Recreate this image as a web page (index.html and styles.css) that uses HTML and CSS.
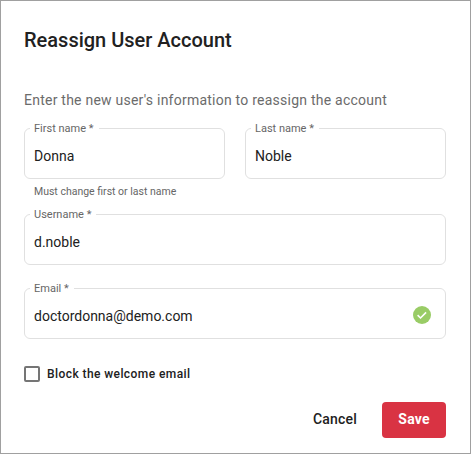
FILE: index.html
```html
<!DOCTYPE html>
<html lang="en">
<head>
    <meta charset="UTF-8">
    <title>Reassign User Account</title>
    <link rel="stylesheet" href="styles.css">
</head>
<body>
    <div class="dialog">
        <h1 class="dialog-title">Reassign User Account</h1>
        <p class="dialog-intro">Enter the new user's information to reassign the account</p>

        <div class="name-row">
            <div class="name-col">
                <fieldset class="field">
                    <legend>First name *</legend>
                    <input class="field-input" type="text" value="Donna">
                </fieldset>
                <div class="field-hint">Must change first or last name</div>
            </div>
            <div class="name-col">
                <fieldset class="field">
                    <legend>Last name *</legend>
                    <input class="field-input" type="text" value="Noble">
                </fieldset>
            </div>
        </div>

        <fieldset class="field username-field">
            <legend>Username *</legend>
            <input class="field-input" type="text" value="d.noble">
        </fieldset>

        <fieldset class="field email-field">
            <legend>Email *</legend>
            <input class="field-input" type="text" value="doctordonna@demo.com">
            <svg class="valid-icon" viewBox="0 0 18 18" width="18" height="18">
                <circle cx="9" cy="9" r="9" fill="#99cc66"/>
                <path d="M4.6 9.2l2.9 2.8 5.6-5.6" fill="none" stroke="#fff" stroke-width="1.6"/>
            </svg>
        </fieldset>

        <label class="check-row">
            <span class="check-box"></span>
            <span class="check-label">Block the welcome email</span>
        </label>

        <div class="actions">
            <button class="cancel-button">Cancel</button>
            <button class="save-button">Save</button>
        </div>
    </div>
</body>
</html>
```

FILE: styles.css
```css
body {
    margin: 0;
    background-color: #fff;
    font-family: Roboto, "Liberation Sans", sans-serif;
}

.dialog {
    box-sizing: border-box;
    width: 471px;
    height: 454px;
    padding: 0 24px 0 23px;
    border: 1px solid #a0a0a0;
    color: #212121;
}

.dialog-title {
    margin: 0;
    padding-top: 26px;
    font-size: 20px;
    line-height: 26px;
    font-weight: 500;
}

.dialog-intro {
    margin: 37px 0 0;
    font-size: 14px;
    line-height: 20px;
    letter-spacing: 0.235px;
    color: #6b6b6b;
}

/* 入力欄 */
.field {
    position: relative;
    box-sizing: border-box;
    height: 58px;
    margin: 0;
    padding: 0 0 0 9px;
    border: 1px solid #e0e0e0;
    border-radius: 6px;
}

.field legend {
    margin-left: -4px;
    padding: 2px 5px 0 4px;
    font-size: 11px;
    line-height: 12px;
    color: #666;
}

.field-input {
    display: block;
    width: 100%;
    box-sizing: border-box;
    height: 42px;
    padding: 0 40px 0 0;
    border: none;
    outline: none;
    background: none;
    font-family: inherit;
    font-size: 14px;
    color: #212121;
}

.name-row {
    display: flex;
    gap: 20px;
    margin-top: 11px;
}

.name-col {
    flex: 1;
}

.field-hint {
    margin: 6px 0 0 10px;
    font-size: 10.5px;
    line-height: 13px;
    color: #666;
}

.username-field {
    margin-top: 9px;
}

.email-field {
    margin-top: 16px;
}

.valid-icon {
    position: absolute;
    right: 14px;
    top: 11px;
}

/* チェックボックス */
.check-row {
    display: flex;
    align-items: center;
    gap: 7px;
    margin-top: 27px;
}

.check-box {
    box-sizing: border-box;
    width: 16px;
    height: 16px;
    border: 2px solid #757575;
    border-radius: 2px;
}

.check-label {
    font-size: 12px;
    font-weight: 500;
    letter-spacing: 0.42px;
}

/* ボタン */
.actions {
    display: flex;
    justify-content: flex-end;
    align-items: center;
    gap: 25px;
    margin-top: 20px;
}

.cancel-button, .save-button {
    height: 36px;
    border: none;
    background: none;
    padding: 0 0 2px;
    font-family: inherit;
    font-size: 14px;
    font-weight: 500;
    letter-spacing: 0.2px;
    color: #212121;
    cursor: pointer;
}

.save-button {
    width: 64px;
    border-radius: 4px;
    background-color: #d93343;
    font-weight: 700;
    color: #fff;
}
```
